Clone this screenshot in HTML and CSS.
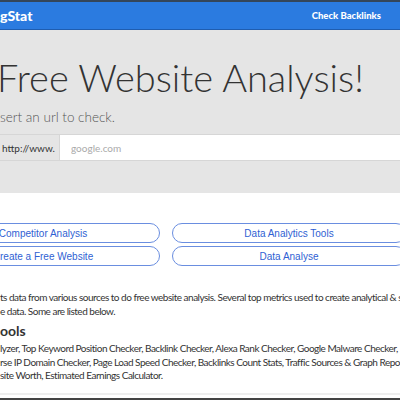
FILE: index.html
```html
<!DOCTYPE html>
<html lang="en">
<head>
    <meta charset="UTF-8">
    <meta name="viewport" content="width=device-width, initial-scale=1.0">
    <title>Free Website Analysis</title>
    <link rel="stylesheet" href="styles.css">
</head>
<body>
    <header class="topbar">
        <span class="brand">gStat</span>
        <a class="nav-link" href="#">Check Backlinks</a>
    </header>

    <section class="hero">
        <h1>Free Website Analysis!</h1>
        <p class="lead">sert an url to check.</p>
        <div class="url-group">
            <span class="url-addon">http://www.</span>
            <input type="text" class="url-input" placeholder="google.com">
        </div>
    </section>

    <section class="links">
        <a class="pill" href="#">Competitor Analysis</a>
        <a class="pill" href="#">Data Analytics Tools</a>
        <a class="pill" href="#">Create a Free Website</a>
        <a class="pill" href="#">Data Analyse</a>
    </section>

    <section class="about">
        <p class="line">ts data from various sources to do free website analysis. Several top metrics used to create analytical &amp; st</p>
        <p class="line">e data. Some are listed below.</p>
        <h3>ools</h3>
        <p class="line">lyzer, Top Keyword Position Checker, Backlink Checker, Alexa Rank Checker, Google Malware Checker, Do</p>
        <p class="line">rse IP Domain Checker, Page Load Speed Checker, Backlinks Count Stats, Traffic Sources &amp; Graph Report,</p>
        <p class="line">site Worth, Estimated Earnings Calculator.</p>
    </section>

    <footer class="footer"></footer>
</body>
</html>
```

FILE: styles.css
```css
html, body {
    margin: 0;
    padding: 0;
}
body {
    width: 400px;
    height: 400px;
    overflow: hidden;
    background-color: white;
    font-family: Lato, "Liberation Sans", sans-serif;
    color: #333;
}
.topbar {
    height: 27px;
    border-top: 2px solid #34465a;
    border-bottom: 1px solid #1f5db0;
    background-color: #2b7be0;
    display: flex;
    align-items: center;
    justify-content: space-between;
    padding-right: 19px;
}
.brand {
    color: white;
    font-weight: 900;
    font-size: 14px;
}
.nav-link {
    color: white;
    font-weight: 900;
    font-size: 9.5px;
    text-decoration: none;
}
.hero {
    background-color: #e5e5e5;
    height: 163px;
    padding-top: 1px;
    box-sizing: border-box;
}
.hero h1 {
    margin: 23px 0 0 -3px;
    font-weight: 300;
    font-size: 38px;
    line-height: 46px;
    color: #333;
    white-space: nowrap;
}
.lead {
    margin: 7px 0 0 0;
    font-weight: 300;
    font-size: 13.5px;
    line-height: 20px;
    color: #555;
}
.url-group {
    margin-top: 7px;
    display: flex;
    height: 27px;
    border-top: 1px solid #d6d6d6;
    border-bottom: 1px solid #d6d6d6;
    box-sizing: border-box;
}
.url-addon {
    width: 60px;
    border-right: 1px solid #d6d6d6;
    display: flex;
    align-items: center;
    font-size: 10px;
    color: #333;
    padding-left: 2px;
    box-sizing: border-box;
}
.url-input {
    flex-grow: 1;
    border: none;
    outline: none;
    padding: 0 11px;
    font-family: Lato, sans-serif;
    font-size: 10px;
    background-color: white;
}
.url-input::placeholder {
    color: #aaa;
}
.links {
    margin: 30px 0 0 -74px;
    display: grid;
    grid-template-columns: 234px 234px;
    column-gap: 12px;
    row-gap: 3px;
}
.pill {
    height: 20px;
    border: 1px solid #6a8ee0;
    border-radius: 10px;
    box-sizing: border-box;
    display: flex;
    align-items: center;
    justify-content: center;
    font-family: "Liberation Sans", Arial, sans-serif;
    font-size: 10px;
    color: #2f5fd3;
    text-decoration: none;
}
.about {
    margin-top: 24px;
    height: 103px;
    border-bottom: 2px solid #eee;
    font-size: 10px;
    letter-spacing: -0.5px;
    color: #333;
}
.line {
    margin: 0;
    line-height: 14px;
    white-space: nowrap;
}
.about h3 {
    margin: 4px 0 2px 0;
    font-size: 14px;
    line-height: 18px;
    letter-spacing: 0;
    font-weight: bold;
}
.about h3 ~ .line {
    line-height: 13.5px;
}
.footer {
    margin-top: 3px;
    height: 10px;
    background-color: #444;
}
```
